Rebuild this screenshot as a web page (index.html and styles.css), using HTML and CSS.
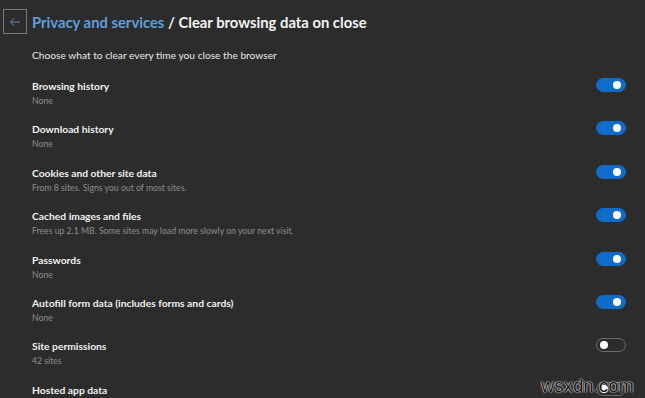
FILE: index.html
```html
<!DOCTYPE html>
<html>
<head>
<meta charset="utf-8">
<link rel="stylesheet" href="styles.css">
</head>
<body>
<div class="page">
  <div class="header">
    <div class="back">
      <svg width="12" height="10" viewBox="0 0 12 10"><path d="M11 5H1.5M5.5 1L1.5 5l4 4" fill="none" stroke="#5a8fc2" stroke-width="1"/></svg>
    </div>
    <h1 class="title"><span class="crumb">Privacy and services</span> / Clear browsing data on close</h1>
  </div>
  <p class="intro">Choose what to clear every time you close the browser</p>
  <div class="list">
    <div class="row"><div class="text"><div class="name">Browsing history</div><div class="desc">None</div></div><span class="toggle on"></span></div>
    <div class="row"><div class="text"><div class="name">Download history</div><div class="desc">None</div></div><span class="toggle on"></span></div>
    <div class="row"><div class="text"><div class="name">Cookies and other site data</div><div class="desc">From 8 sites. Signs you out of most sites.</div></div><span class="toggle on"></span></div>
    <div class="row"><div class="text"><div class="name">Cached images and files</div><div class="desc">Frees up 2.1 MB. Some sites may load more slowly on your next visit.</div></div><span class="toggle on"></span></div>
    <div class="row"><div class="text"><div class="name">Passwords</div><div class="desc">None</div></div><span class="toggle on"></span></div>
    <div class="row"><div class="text"><div class="name">Autofill form data (includes forms and cards)</div><div class="desc">None</div></div><span class="toggle on"></span></div>
    <div class="row"><div class="text"><div class="name">Site permissions</div><div class="desc">42 sites</div></div><span class="toggle"></span></div>
    <div class="row last"><div class="text"><div class="name">Hosted app data</div></div><span class="toggle"></span></div>
  </div>
  <div class="watermark">wsxdn.com</div>
</div>
</body>
</html>
```
FILE: styles.css
```css
html, body {
  margin: 0;
  padding: 0;
  background: #2c2c2c;
  overflow: hidden;
}
.page {
  position: relative;
  width: 645px;
  height: 398px;
  overflow: hidden;
  font-family: "Lato", "Open Sans", sans-serif;
  color: #f0f0f0;
}
.header {
  display: flex;
  align-items: center;
  padding: 9px 0 0 3px;
}
.back {
  width: 22px;
  height: 23px;
  border: 1px solid #7a7a7a;
  display: flex;
  align-items: center;
  justify-content: center;
}
.title {
  margin: 0 0 0 5px;
  font-size: 14.8px;
  font-weight: 700;
  color: #f2f2f2;
  line-height: 24px;
}
.crumb {
  color: #5f9fdc;
}
.intro {
  margin: 14px 0 0 32px;
  font-size: 10.2px;
  line-height: 14px;
  color: #e8e8e8;
}
.list {
  display: flex;
  flex-direction: column;
  padding: 17px 19px 0 32px;
}
.row {
  height: 43.4px;
  display: flex;
  justify-content: space-between;
  align-items: flex-start;
}
.row.last {
  height: auto;
}
.name {
  font-size: 10.3px;
  font-weight: 700;
  line-height: 15px;
  color: #f0f0f0;
}
.desc {
  font-size: 8.7px;
  line-height: 13px;
  color: #8c8c8c;
}
.toggle {
  position: relative;
  width: 28px;
  height: 12px;
  margin-top: -1px;
  border-radius: 8px;
  border: 1px solid #6b6b6b;
}
.toggle::after {
  content: "";
  position: absolute;
  top: 2px;
  left: 3px;
  width: 8px;
  height: 8px;
  border-radius: 50%;
  background: #ffffff;
}
.toggle.on {
  background: #0f6cc8;
  border-color: #0f6cc8;
}
.toggle.on::after {
  left: auto;
  right: 4px;
}
.watermark {
  position: absolute;
  right: 11px;
  bottom: 1px;
  font-family: "Liberation Sans", Arial, sans-serif;
  font-size: 18px;
  letter-spacing: 0.3px;
  color: #111;
  text-shadow: 0 0 2px #fff, 0 0 1px #fff;
}
```
